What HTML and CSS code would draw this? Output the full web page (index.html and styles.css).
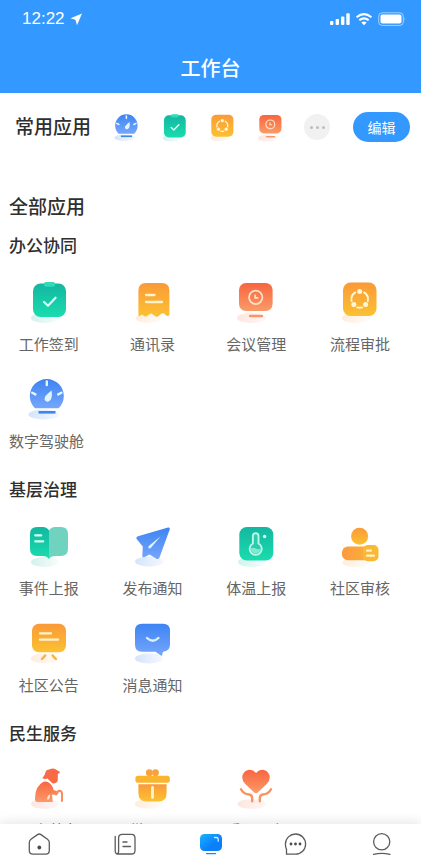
FILE: index.html
```html
<!DOCTYPE html>
<html lang="zh-CN">
<head>
    <meta charset="UTF-8">
    <meta name="viewport" content="width=device-width, initial-scale=1">
    <title>工作台</title>
    <link rel="stylesheet" href="styles.css">
</head>
<body>

    <!-- Shared gradients and icons -->
    <svg class="defs" width="0" height="0" aria-hidden="true">
        <defs>
            <linearGradient id="green" x1="0" y1="0" x2="0" y2="1"><stop offset="0" stop-color="#12b7a0"/><stop offset="1" stop-color="#1bdcae"/></linearGradient>
            <linearGradient id="orange" x1="0" y1="0" x2="0" y2="1"><stop offset="0" stop-color="#fa9a38"/><stop offset="1" stop-color="#fcc132"/></linearGradient>
            <linearGradient id="red" x1="0" y1="0" x2="0" y2="1"><stop offset="0" stop-color="#f9653f"/><stop offset="1" stop-color="#fb9a68"/></linearGradient>
            <linearGradient id="blue" x1="0" y1="0" x2="0" y2="1"><stop offset="0" stop-color="#3d84f3"/><stop offset="1" stop-color="#76a6fb"/></linearGradient>
            <linearGradient id="amber" x1="0" y1="0" x2="1" y2="0"><stop offset="0" stop-color="#fb9a40"/><stop offset="1" stop-color="#fbb338"/></linearGradient>
            <linearGradient id="active" x1="0" y1="0" x2="1" y2="1"><stop offset="0" stop-color="#1cb4fb"/><stop offset="0.6" stop-color="#0a80fb"/></linearGradient>
            <linearGradient id="shadeGreen"><stop offset="0" stop-color="#1bbd9f" stop-opacity="0.2"/><stop offset="1" stop-color="#1bbd9f" stop-opacity="0.03"/></linearGradient>
            <linearGradient id="shadeOrange"><stop offset="0" stop-color="#fb9a40" stop-opacity="0.18"/><stop offset="1" stop-color="#fb9a40" stop-opacity="0.03"/></linearGradient>
            <linearGradient id="shadeRed"><stop offset="0" stop-color="#f9653f" stop-opacity="0.17"/><stop offset="1" stop-color="#f9653f" stop-opacity="0.05"/></linearGradient>
            <linearGradient id="shadeBlue"><stop offset="0" stop-color="#3d84f3" stop-opacity="0.22"/><stop offset="1" stop-color="#3d84f3" stop-opacity="0.05"/></linearGradient>
        </defs>
        <symbol id="i-gauge" viewBox="0 0 44 44">
            <ellipse cx="19" cy="37.5" rx="15.5" ry="5" fill="url(#shadeBlue)"/>
            <path d="M10 31.3A17 17 0 1 1 33.6 31.3Z" fill="url(#blue)"/>
            <path d="M21.8 4.5v3.6M7.2 15.8l3.2 1.6M36.4 15.8l-3.2 1.6" stroke="#e6f6ff" stroke-width="2.4" stroke-linecap="round"/>
            <path d="M26.6 13.6Q27.8 20.5 25 23.6A3.1 3.1 0 0 1 19.8 20.4Q21 17.5 26.6 13.6Z" fill="#e1f5ff"/>
            <path d="M13.5 35.3h17" stroke="#3f86e6" stroke-width="2.6"/>
        </symbol>
        <symbol id="i-check" viewBox="0 0 44 44">
            <ellipse cx="18" cy="38" rx="14" ry="5" fill="url(#shadeGreen)"/>
            <rect x="6" y="3.5" width="33" height="33.5" rx="7.5" fill="url(#green)"/>
            <rect x="17" y="2" width="11" height="4.8" rx="1.8" fill="#2fdcba"/>
            <path d="M17 22l4 3.7 7.6-8" fill="none" stroke="#d5fff4" stroke-width="2.2" stroke-linecap="round" stroke-linejoin="round"/>
        </symbol>
        <symbol id="i-flow" viewBox="0 0 44 44">
            <ellipse cx="18" cy="38" rx="14" ry="5" fill="url(#shadeOrange)"/>
            <rect x="5" y="2.5" width="33.5" height="33.5" rx="7.5" fill="url(#orange)"/>
            <path d="M17.3 12.4A8.3 8.3 0 0 0 13.6 21M26.1 12.4A8.3 8.3 0 0 1 29.8 21M19.3 27.4a8.3 8.3 0 0 0 4.8 0" fill="none" stroke="#fff6d8" stroke-width="1.9" stroke-linecap="round"/>
            <circle cx="21.7" cy="11.6" r="2.5" fill="#fff6d8"/>
            <circle cx="15.8" cy="24.5" r="2.5" fill="#fff6d8"/>
            <circle cx="27.6" cy="24.5" r="2.5" fill="#fff6d8"/>
        </symbol>
        <symbol id="i-meeting" viewBox="0 0 44 44">
            <ellipse cx="17.5" cy="38" rx="14.5" ry="5" fill="url(#shadeRed)"/>
            <rect x="5" y="3" width="33.6" height="28" rx="7" fill="url(#red)"/>
            <circle cx="21.7" cy="17.3" r="6.7" fill="none" stroke="#ffe0c4" stroke-width="1.8"/>
            <path d="M21.2 14.6v3.2h3.2" fill="none" stroke="#ffe0c4" stroke-width="1.8"/>
            <path d="M16 36h12" stroke="#fb9566" stroke-width="2.4" stroke-linecap="round"/>
        </symbol>
    </svg>

    <div class="app">
        <header class="header">
            <div class="status-bar">
                <span class="time">12:22</span>
                <svg class="location" width="12" height="13" viewBox="0 0 12 13"><path d="M12 .5L.5 5.3 5.4 6.8 7 12.3Z" fill="#fff"/></svg>
                <svg class="signals" width="78" height="14" viewBox="0 0 78 14">
                    <g fill="#fff">
                        <rect x="1" y="9" width="3.4" height="4" rx="1"/>
                        <rect x="6.6" y="7" width="3.4" height="6" rx="1"/>
                        <rect x="12" y="4.4" width="3.4" height="8.6" rx="1"/>
                        <rect x="17.3" y="1.2" width="3.4" height="11.8" rx="1"/>
                        <rect x="51.5" y="2.6" width="21" height="9" rx="1.8"/>
                        <path d="M75.6 5.2v4q1.5-2 0-4Z" opacity=".6"/>
                        <path d="M35 13.2l-2.6-2.7q2.6-1.9 5.2 0Z"/>
                    </g>
                    <path d="M27.6 5.3q7.4-6.4 14.8 0M30.3 8.3q4.7-3.9 9.4 0" fill="none" stroke="#fff" stroke-width="2.1"/>
                    <rect x="49.7" y=".8" width="24.6" height="12.6" rx="3.4" fill="none" stroke="#fff" opacity=".55"/>
                </svg>
            </div>
            <h1>工作台</h1>
        </header>

        <main class="content">
            <!-- Frequently used apps -->
            <div class="common">
                <h2>常用应用</h2>
                <div class="common-icons">
                    <a href="#" aria-label="数字驾驶舱"><svg viewBox="0 0 44 44"><use href="#i-gauge"/></svg></a>
                    <a href="#" aria-label="工作签到"><svg viewBox="0 0 44 44"><use href="#i-check"/></svg></a>
                    <a href="#" aria-label="流程审批"><svg viewBox="0 0 44 44"><use href="#i-flow"/></svg></a>
                    <a href="#" aria-label="会议管理"><svg viewBox="0 0 44 44"><use href="#i-meeting"/></svg></a>
                    <button class="more-btn" type="button" aria-label="更多"><i></i><i></i><i></i></button>
                </div>
                <button class="edit-btn" type="button">编辑</button>
            </div>

            <h2 class="all-title">全部应用</h2>

            <section class="section">
                <h3>办公协同</h3>
                <div class="app-grid">
                    <a class="app-item" href="#">
                        <svg viewBox="0 0 44 44"><use href="#i-check"/></svg>
                        <span>工作签到</span>
                    </a>
                    <a class="app-item" href="#">
                        <svg viewBox="0 0 44 44">
                            <ellipse cx="18" cy="38" rx="13.5" ry="5" fill="url(#shadeOrange)"/>
                            <path d="M7.4 10.5Q7.4 3 14.9 3H30.9Q38.4 3 38.4 10.5V35Q37 37 35 35.2L33 33.6Q31.5 32.6 30 34L27.3 36.2Q25.5 37.5 23.6 35.8L21.5 34.2Q20 33 18.5 34.2L16 36Q14 37.2 12.5 35.6Q11 34 9.6 35.6Q7.8 37 7.4 35Z" fill="url(#orange)"/>
                            <path d="M15 15h8.5M15 22h16" stroke="#fff3cf" stroke-width="2.3" stroke-linecap="round"/>
                        </svg>
                        <span>通讯录</span>
                    </a>
                    <a class="app-item" href="#">
                        <svg viewBox="0 0 44 44"><use href="#i-meeting"/></svg>
                        <span>会议管理</span>
                    </a>
                    <a class="app-item" href="#">
                        <svg viewBox="0 0 44 44"><use href="#i-flow"/></svg>
                        <span>流程审批</span>
                    </a>
                    <a class="app-item long-name" href="#">
                        <svg viewBox="0 0 44 44"><use href="#i-gauge"/></svg>
                        <span>数字驾驶舱</span>
                    </a>
                </div>
            </section>

            <section class="section">
                <h3>基层治理</h3>
                <div class="app-grid">
                    <a class="app-item" href="#">
                        <svg viewBox="0 0 44 44">
                            <ellipse cx="18" cy="38" rx="14" ry="5" fill="url(#shadeGreen)"/>
                            <path d="M22 6.5Q24 3 28 3H34Q41 3 41 10V25Q41 32 34 32H28Q24 32 22 35Z" fill="#70d3bf"/>
                            <path d="M22 6.5Q20 3 16 3H10Q3 3 3 10V25Q3 32 10 32H16Q20 32 22 35Z" fill="url(#green)"/>
                            <path d="M8.2 11.3h6M8.2 17.3h8" stroke="#d5fff4" stroke-width="2.3" stroke-linecap="round"/>
                        </svg>
                        <span>事件上报</span>
                    </a>
                    <a class="app-item" href="#">
                        <svg viewBox="0 0 44 44">
                            <ellipse cx="18.5" cy="37.5" rx="14.5" ry="5" fill="url(#shadeBlue)"/>
                            <path d="M37 3.5Q39.3 3 38.7 5.5L28.5 33.5Q27.3 36 25 34.6L18.6 30.4L13 33.2Q11 33.8 11.3 31.5L11.8 22.5L5.8 15.3Q4.5 13 7 12.2Z" fill="url(#blue)"/>
                            <path d="M29.5 12.5L20.2 23.4Q18.6 25 17.6 24.2Q16.6 23 18.4 21.5Z" fill="#e6f6ff"/>
                        </svg>
                        <span>发布通知</span>
                    </a>
                    <a class="app-item" href="#">
                        <svg viewBox="0 0 44 44">
                            <ellipse cx="18" cy="38" rx="14" ry="5" fill="url(#shadeGreen)"/>
                            <rect x="5.3" y="3" width="34" height="33.5" rx="7.5" fill="url(#green)"/>
                            <path d="M18.9 19.5V12a2.8 2.8 0 0 1 5.6 0V19.5A6 6 0 1 1 18.9 19.5Z" fill="#2bcbb0" stroke="#b9f7e6" stroke-width="1.9"/>
                            <path d="M16.8 24.5q2.5-1.6 5 0t4.8 0a4.9 4.9 0 0 1-9.8 0Z" fill="#7cebd1"/>
                            <circle cx="30.6" cy="12.5" r="1.7" fill="#d5fff4"/>
                        </svg>
                        <span>体温上报</span>
                    </a>
                    <a class="app-item" href="#">
                        <svg viewBox="0 0 44 44">
                            <ellipse cx="17.5" cy="38.5" rx="13" ry="4.5" fill="url(#shadeOrange)"/>
                            <circle cx="21.6" cy="12.2" r="8.5" fill="url(#orange)"/>
                            <rect x="4" y="22.5" width="30" height="13.8" rx="6" fill="url(#amber)"/>
                            <rect x="25" y="21" width="15.5" height="16.3" rx="5" fill="#fbb832"/>
                            <path d="M29 26.7h4M29 31.7h7" stroke="#fff3cf" stroke-width="2.2" stroke-linecap="round"/>
                        </svg>
                        <span>社区审核</span>
                    </a>
                    <a class="app-item" href="#">
                        <svg viewBox="0 0 44 44">
                            <ellipse cx="18" cy="37.5" rx="14" ry="5" fill="url(#shadeOrange)"/>
                            <rect x="5" y="2.7" width="34" height="28.5" rx="7" fill="url(#orange)"/>
                            <path d="M13 12.3h11M13 18.7h18" stroke="#fff3cf" stroke-width="2.3" stroke-linecap="round"/>
                            <path d="M18.2 34.5l-3.2 3.5M25.6 34.5l3.2 3.5" stroke="#fbb040" stroke-width="2.4" stroke-linecap="round"/>
                        </svg>
                        <span>社区公告</span>
                    </a>
                    <a class="app-item" href="#">
                        <svg viewBox="0 0 44 44">
                            <ellipse cx="18" cy="37.5" rx="14" ry="5" fill="url(#shadeBlue)"/>
                            <path d="M11 2.7H32Q39 2.7 39 9.7V23.7Q39 29.5 33 30.5Q31.3 30.8 31.3 34Q31 35.5 29.5 34.3L24.5 30.7H11Q4 30.7 4 23.7V9.7Q4 2.7 11 2.7Z" fill="url(#blue)"/>
                            <path d="M16 17q5.7 5.4 11.4 0" fill="none" stroke="#d9f0ff" stroke-width="2.4" stroke-linecap="round"/>
                        </svg>
                        <span>消息通知</span>
                    </a>
                </div>
            </section>

            <section class="section">
                <h3>民生服务</h3>
                <div class="app-grid">
                    <a class="app-item" href="#">
                        <svg viewBox="0 0 44 44">
                            <ellipse cx="18" cy="38" rx="14" ry="4.8" fill="url(#shadeRed)"/>
                            <path d="M15.3 12.3Q18 9.5 18.7 5.5Q19.5 3.6 22 3.6Q26 1.6 28.5 3.3L32.8 5.8Q33 7.6 30.8 7.8V13Q31 16.8 27.5 17.3Q25.5 18 24 16L20.5 12.5Q18 13.5 15.3 12.3Z" fill="#f96b45"/>
                            <path d="M16.5 15.8Q20 14.5 23 17.5Q26.5 21 26.5 24L31 25.5Q32.5 27.5 29.5 29L24.8 28.5Q25.5 32 25.8 36H10.5Q7.5 36 8 31.5Q8.5 20 16.5 15.8Z" fill="url(#red)"/>
                            <path d="M29 28.5Q30 25 32.5 24.8Q35 25 35 28V35" fill="none" stroke="#fb8a5e" stroke-width="2" stroke-linecap="round"/>
                            <path d="M23 28Q20.2 29.5 20 33.5h1.800Q23.500 31 23 28Z" fill="#ffe3d2"/>
                        </svg>
                        <span>居家养老</span>
                    </a>
                    <a class="app-item" href="#">
                        <svg viewBox="0 0 44 44">
                            <ellipse cx="18" cy="38" rx="14" ry="4.8" fill="url(#shadeOrange)"/>
                            <circle cx="18.3" cy="6.7" r="3.4" fill="#f8a23c"/>
                            <circle cx="24.5" cy="6.7" r="3.4" fill="#f8a23c"/>
                            <rect x="4.4" y="9.7" width="34.4" height="7" rx="2.5" fill="#fbb430"/>
                            <path d="M7.4 18.2H35.6V27Q35.6 35.5 27.5 35.5H15.5Q7.4 35.5 7.4 27Z" fill="url(#orange)"/>
                            <path d="M21.5 21.5v10" stroke="#fff3cf" stroke-width="2.8" stroke-linecap="round"/>
                        </svg>
                        <span>微心愿</span>
                    </a>
                    <a class="app-item" href="#">
                        <svg viewBox="0 0 44 44">
                            <ellipse cx="18" cy="38" rx="14.5" ry="4.8" fill="url(#shadeRed)"/>
                            <path d="M22 7Q18.5 3 14 4Q8.5 5.5 8.2 11.5Q8.2 15 11.5 18.3L20 26.3Q22 28 24 26.3L32.5 18.3Q35.8 15 35.8 11.5Q35.5 5.5 30 4Q25.5 3 22 7Z" fill="url(#red)"/>
                            <path d="M7 23.2Q9.5 28 15 28.5Q18.2 29 18.2 32V35.3M37 23.2Q34.5 28 29 28.5Q25.8 29 25.8 32V35.3" fill="none" stroke="#f99460" stroke-width="2.4" stroke-linecap="round"/>
                        </svg>
                        <span>爱心服务</span>
                    </a>
                </div>
            </section>
        </main>

        <!-- Bottom tabs -->
        <nav class="tab-bar">
            <a href="#" aria-label="首页">
                <svg viewBox="0 0 24 24"><path d="M10.5 2.6Q12.2 1.4 14 2.6L20.5 7.2Q22.3 8.6 22.3 10.5V18.5Q22.3 22.2 18.6 22.2H6Q2.3 22.2 2.3 18.5V10.5Q2.3 8.6 4 7.2Z"/><circle class="dot" cx="12.3" cy="15.5" r="1.9"/></svg>
            </a>
            <a href="#" aria-label="资讯">
                <svg viewBox="0 0 24 24"><path d="M9.2 2.4H18.4Q22 2.4 22 6V18.4Q22 22 18.4 22H5.2Q2.2 22 2.2 19V4.5M5.6 20V6Q5.6 2.4 9.2 2.4M5.6 19Q5.6 22 3.8 22M10 10h4M10 14.5h7.5"/></svg>
            </a>
            <a href="#" aria-label="工作台" aria-current="page">
                <svg class="current" viewBox="0 0 24 24"><rect x="1" y="2" width="22" height="17" rx="4.5" fill="url(#active)"/><path d="M15.5 5.5h2q1.7 0 1.7 1.7v2" stroke="#d4f1ff"/><path d="M7.5 21.6h9" stroke="#1689fb"/></svg>
            </a>
            <a href="#" aria-label="消息">
                <svg viewBox="0 0 24 24"><path d="M11.5 22.2H2.5V17.5Q1.4 14.8 1.4 12A10.1 10.1 0 1 1 11.5 22.2Z"/><circle class="dot" cx="7" cy="12" r="1.4"/><circle class="dot" cx="11.5" cy="12" r="1.4"/><circle class="dot" cx="16" cy="12" r="1.4"/></svg>
            </a>
            <a href="#" aria-label="我的">
                <svg viewBox="0 0 24 24"><circle cx="11.7" cy="9.7" r="8.1"/><path d="M3.5 22.4q8.2-2 16.4 0"/></svg>
            </a>
        </nav>
    </div>

</body>
</html>
```
FILE: styles.css
```css
/* General Styles */
* {
    box-sizing: border-box;
}

body {
    margin: 0;
    font-family: "Liberation Sans", "Noto Sans CJK SC", sans-serif;
    background-color: #fff;
    color: #2f2f2f;
}

h1, h2, h3 {
    margin: 0;
    font-weight: 500;
}

a {
    color: inherit;
    text-decoration: none;
}

svg {
    display: block;
}

.defs {
    position: absolute;
}

.app {
    display: flex;
    flex-direction: column;
    height: 100vh;
}

/* Header */
.header {
    background-color: #3398ff;
    color: #fff;
}

.status-bar {
    display: flex;
    align-items: center;
    height: 37px;
    padding: 1px 14px 0 22px;
}

.time {
    font-size: 17px;
    line-height: 20px;
}

.location {
    margin-left: 5px;
}

.signals {
    margin-left: auto;
}

.header h1 {
    padding-top: 8px;
    font-size: 20px;
    line-height: 48px;
    text-align: center;
}

/* Scrolling content */
.content {
    flex: 1;
    min-height: 0;
    padding-top: 19px;
    overflow-y: auto;
    scrollbar-width: none;
}

.content h2 {
    font-size: 19px;
    line-height: 28px;
}

/* Common apps */
.common {
    display: flex;
    align-items: center;
    padding: 0 11px 0 15px;
}

.common h2 {
    padding-top: 2px;
}

.common-icons {
    display: flex;
    align-items: center;
    gap: 19px;
    margin-left: 21px;
}

.common-icons svg {
    width: 29px;
    height: 29px;
}

.more-btn {
    display: flex;
    align-items: center;
    justify-content: center;
    gap: 3px;
    width: 26px;
    height: 26px;
    padding: 0;
    border: none;
    border-radius: 50%;
    background-color: #f1f1f1;
    cursor: pointer;
}

.more-btn i {
    width: 3px;
    height: 3px;
    border-radius: 50%;
    background-color: #bdbdbd;
}

.edit-btn {
    width: 57px;
    height: 30px;
    margin-left: auto;
    padding: 0;
    border: none;
    border-radius: 15px;
    background-color: #3398ff;
    color: #fff;
    font-family: inherit;
    font-size: 14px;
    cursor: pointer;
}

/* All apps */
.content .all-title {
    padding: 52px 9px 13px;
}

.section {
    padding: 0 21px 28px 9px;
}

.section h3 {
    font-size: 17px;
    line-height: 24px;
}

.app-grid {
    display: grid;
    grid-template-columns: repeat(4, 1fr);
    gap: 23px 24px;
    margin-top: 21px;
}

.section:last-child .app-grid {
    margin-top: 19px;
}

.app-item {
    display: flex;
    flex-direction: column;
    align-items: center;
    gap: 11px;
    color: #666;
    font-size: 15px;
    line-height: 19px;
    white-space: nowrap;
}

.app-item.long-name {
    justify-self: start;
}

.app-item svg {
    width: 44px;
    height: 44px;
}

/* Tab bar */
.tab-bar {
    display: flex;
    justify-content: space-between;
    padding: 8px 27px 0;
    background-color: #fff;
    box-shadow: 0 -2px 12px rgba(0, 0, 0, 0.1);
    z-index: 1;
}

.tab-bar svg {
    width: 24px;
    height: 24px;
    fill: none;
    stroke: #5c5c5c;
    stroke-width: 1.3;
    stroke-linecap: round;
}

.tab-bar .dot {
    fill: #4a4a4a;
    stroke: none;
}

.tab-bar .current rect {
    stroke: none;
}
```
